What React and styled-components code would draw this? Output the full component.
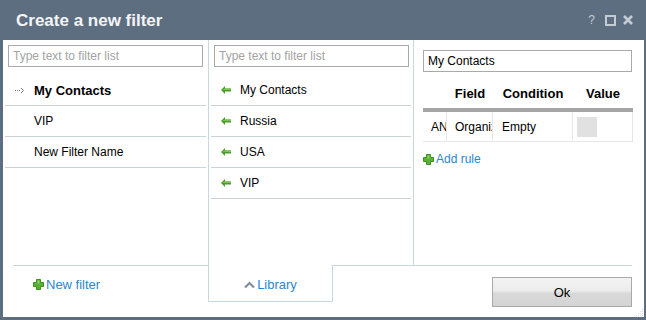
import React from 'react';
import styled, { createGlobalStyle } from 'styled-components';

const GlobalStyle = createGlobalStyle`
  html, body {
    margin: 0;
    padding: 0;
    background: #ffffff;
  }
  body {
    font-family: "Liberation Sans", Arial, sans-serif;
  }
`;

const Window = styled.div`
  position: relative;
  width: 646px;
  height: 320px;
  box-sizing: border-box;
  background: #5d6e80;
  padding: 0 2px 3px 3px;
  display: flex;
  flex-direction: column;
`;

const TitleBar = styled.div`
  height: 40px;
  display: flex;
  align-items: center;
  justify-content: space-between;
  padding: 0 11px 0 13px;
`;

const Title = styled.div`
  font-size: 17px;
  font-weight: bold;
  color: #f3f5f7;
  margin-top: 1px;
`;

const TitleTools = styled.div`
  display: flex;
  align-items: center;
  gap: 7px;
  color: #c3ccd5;
`;

const Help = styled.span`
  font-size: 12px;
  margin-right: 3px;
`;

const Body = styled.div`
  flex: 1;
  background: #ffffff;
  display: flex;
  flex-direction: column;
`;

const Panels = styled.div`
  height: 225px;
  display: flex;
`;

const Column = styled.div`
  width: ${p => p.$width}px;
  box-sizing: border-box;
  border-right: ${p => (p.$last ? 'none' : '1px solid #c8d8de')};
  display: flex;
  flex-direction: column;
  padding: ${p => p.$pad};
`;

const Search = styled.input`
  box-sizing: border-box;
  height: 22px;
  margin: ${p => p.$margin};
  border: 1px solid #a9a9a9;
  padding: 0 4px;
  font-family: "Liberation Sans", Arial, sans-serif;
  font-size: 12px;
  color: #000;
  outline: none;
  &::placeholder {
    color: #a3a3a3;
  }
`;

const List = styled.div`
  margin: 8px 2px 0;
`;

const Row = styled.div`
  height: 31px;
  box-sizing: border-box;
  border-bottom: 1px solid #ccd3d6;
  display: flex;
  align-items: center;
  font-size: ${p => (p.$bold ? 13 : 12)}px;
  font-weight: ${p => (p.$bold ? 'bold' : 'normal')};
  color: #000;
`;

const Marker = styled.span`
  width: 29px;
  padding-left: 10px;
  box-sizing: border-box;
  display: flex;
  align-items: center;
`;

const Table = styled.div`
  margin-top: 1px;
  width: 210px;
`;

const HeadRow = styled.div`
  display: grid;
  grid-template-columns: 24px 46px 80px 60px;
  height: 39px;
  box-sizing: border-box;
  border-bottom: 4px solid #a6a6a6;
  font-size: 13px;
  font-weight: bold;
  color: #000;
`;

const HeadCell = styled.div`
  text-align: center;
  padding-top: 13px;
`;

const DataRow = styled.div`
  display: grid;
  grid-template-columns: 24px 46px 80px 60px;
  height: 30px;
  box-sizing: border-box;
  border-bottom: 1px solid #e6e6e6;
  font-size: 12px;
  color: #000;
`;

const DataCell = styled.div`
  overflow: hidden;
  white-space: nowrap;
  text-overflow: clip;
  padding-left: ${p => p.$pl || 8}px;
  display: flex;
  align-items: center;
  border-right: 1px solid #e6e6e6;
`;

const ValueBox = styled.div`
  width: 20px;
  height: 20px;
  background: #e1e1e1;
`;

const LinkRow = styled.div`
  display: flex;
  align-items: center;
  gap: 2px;
  color: #2a86d1;
  font-size: ${p => p.$size || 12}px;
  margin-top: ${p => p.$top || 0}px;
  cursor: pointer;
`;

const Footer = styled.div`
  flex: 1;
  display: flex;
  align-items: flex-start;
`;

const FootLeft = styled.div`
  width: 195px;
  margin-left: 10px;
  align-self: stretch;
  border-top: 1px solid #c8d8de;
  padding: 11px 0 0 20px;
  box-sizing: border-box;
`;

const Tab = styled.div`
  width: 125px;
  height: 37px;
  box-sizing: border-box;
  border: 1px solid #c8d8de;
  border-top: none;
  display: flex;
  align-items: center;
  justify-content: center;
  padding-top: 3px;
`;

const FootRight = styled.div`
  flex: 1;
  margin-right: 12px;
  align-self: stretch;
  border-top: 1px solid #c8d8de;
  display: flex;
  justify-content: flex-end;
  padding-top: 11px;
`;

const OkButton = styled.button`
  width: 140px;
  height: 30px;
  border: 1px solid #a9a9a9;
  background: linear-gradient(#f3f3f3, #ececec 45%, #d9d9d9 55%, #d4d4d4);
  font-family: "Liberation Sans", Arial, sans-serif;
  font-size: 13px;
  color: #000;
  padding: 0;
`;

const Grip = styled.svg`
  position: absolute;
  right: 2px;
  bottom: 3px;
`;

const DottedArrow = () => (
  <svg width="9" height="7" viewBox="0 0 9 7">
    <rect x="0" y="3" width="1" height="1" fill="#777" />
    <rect x="2" y="3" width="1" height="1" fill="#777" />
    <rect x="4" y="3" width="1" height="1" fill="#777" />
    <path d="M6 1 L8.5 3.5 L6 6" stroke="#777" strokeWidth="1" fill="none" />
  </svg>
);

const GreenArrow = () => (
  <svg width="10" height="8" viewBox="0 0 10 8">
    <path d="M0 4 L4 0 L4 2.5 L10 2.5 L10 5.5 L4 5.5 L4 8 Z" fill="#4a9d2a" />
    <path d="M4 2.5 L10 2.5 L10 4 L1 4 Z" fill="#7cc24e" />
  </svg>
);

const PlusIcon = () => (
  <svg width="11" height="11" viewBox="0 0 11 11">
    <path d="M3.5 0.5 H7.5 V3.5 H10.5 V7.5 H7.5 V10.5 H3.5 V7.5 H0.5 V3.5 H3.5 Z" fill="#58b236" stroke="#3e8e22" strokeWidth="1" />
    <rect x="4.5" y="1.5" width="2" height="3" fill="#8ad46a" />
  </svg>
);

const UpChevron = () => (
  <svg width="11" height="7" viewBox="0 0 11 7">
    <path d="M0 6 L5.5 0.5 L11 6 L9 7 L5.5 3.5 L2 7 Z" fill="#7d8d9f" />
  </svg>
);

const library = ['My Contacts', 'Russia', 'USA', 'VIP'];

export default function App() {
  return (
    <Window>
      <GlobalStyle />
      <TitleBar>
        <Title>Create a new filter</Title>
        <TitleTools>
          <Help>?</Help>
          <svg width="11" height="11" viewBox="0 0 11 11">
            <rect x="1" y="1" width="9" height="9" fill="none" stroke="#c3ccd5" strokeWidth="2" />
          </svg>
          <svg width="10" height="10" viewBox="0 0 10 10">
            <path d="M1 1 L9 9 M9 1 L1 9" stroke="#c3ccd5" strokeWidth="2.6" />
          </svg>
        </TitleTools>
      </TitleBar>
      <Body>
        <Panels>
          <Column $width={206}>
            <Search $margin="5px 5px 0" placeholder="Type text to filter list" />
            <List>
              <Row $bold>
                <Marker><DottedArrow /></Marker>
                My Contacts
              </Row>
              <Row>
                <Marker />
                VIP
              </Row>
              <Row>
                <Marker />
                New Filter Name
              </Row>
            </List>
          </Column>
          <Column $width={205}>
            <Search $margin="5px 4px 0 5px" placeholder="Type text to filter list" />
            <List>
              {library.map(name => (
                <Row key={name}>
                  <Marker><GreenArrow /></Marker>
                  {name}
                </Row>
              ))}
            </List>
          </Column>
          <Column $width={230} $last $pad="10px 12px 0 9px">
            <Search $margin="0" defaultValue="My Contacts" />
            <Table>
              <HeadRow>
                <HeadCell />
                <HeadCell>Field</HeadCell>
                <HeadCell>Condition</HeadCell>
                <HeadCell>Value</HeadCell>
              </HeadRow>
              <DataRow>
                <DataCell>AND</DataCell>
                <DataCell>Organization</DataCell>
                <DataCell $pl={9}>Empty</DataCell>
                <DataCell $pl={4}>
                  <ValueBox />
                </DataCell>
              </DataRow>
            </Table>
            <LinkRow $top={10}>
              <PlusIcon />
              Add rule
            </LinkRow>
          </Column>
        </Panels>
        <Footer>
          <FootLeft>
            <LinkRow $size={13}>
              <PlusIcon />
              New filter
            </LinkRow>
          </FootLeft>
          <Tab>
            <LinkRow $size={13}>
              <UpChevron />
              Library
            </LinkRow>
          </Tab>
          <FootRight>
            <OkButton>Ok</OkButton>
          </FootRight>
        </Footer>
      </Body>
      <Grip width="8" height="8" viewBox="0 0 8 8">
        {[[6, 0], [4, 2], [6, 2], [2, 4], [4, 4], [6, 4], [0, 6], [2, 6], [4, 6], [6, 6]].map(([x, y]) => (
          <rect key={`${x}-${y}`} x={x} y={y} width="1" height="1" fill="#d8dee4" />
        ))}
      </Grip>
    </Window>
  );
}
